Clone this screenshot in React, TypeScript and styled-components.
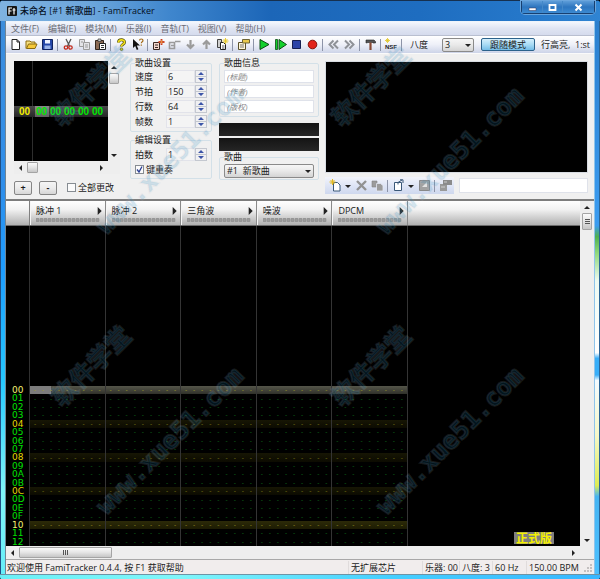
import React, { useState } from "react";
import styled, { createGlobalStyle, css } from "styled-components";

const Global = createGlobalStyle`
  * { box-sizing: border-box; }
  html, body { margin: 0; padding: 0; }
  body {
    font-family: "Open Sans", "Noto Sans CJK SC", sans-serif;
    font-size: 9px;
    line-height: 12px;
    color: #1a1a1a;
    background: #000;
  }
  button, input, select { font: inherit; color: inherit; margin: 0; }
`;

const Window = styled.div`
  position: relative;
  display: grid;
  grid-template: 21px 1fr 6px / 6px minmax(0, 1fr) 6px;
  min-height: 100vh;
  overflow: hidden;
  background: #2a7fd0;
  border-radius: 4px;
`;

const TitleBar = styled.header`
  grid-column: 1 / 4;
  display: flex;
  align-items: center;
  padding: 0 5px 0 7px;
  border-top: 1px solid #16304f;
  background: linear-gradient(90deg, #7fb2e0 0, #6ca6dc 90px, #3f86cd 170px, #1c66b8 270px, #1e6dc0 420px, #2577c9 520px, #2f84d2 100%);
  color: #05101f;
`;

const Title = styled.h1`
  flex: 1;
  margin: 0 0 0 3px;
  font-size: 9px;
  font-weight: 500;
  white-space: nowrap;
`;

const WindowButtons = styled.div`
  align-self: flex-start;
  display: flex;
  height: 13px;
  border: 1px solid #173f70;
  border-top: 0;
  border-radius: 0 0 4px 4px;
  box-shadow: 0 0 0 1px #6aa5dd;
`;

const WindowButton = styled.button<{ $wide?: boolean }>`
  display: flex;
  align-items: center;
  justify-content: center;
  width: ${(p) => (p.$wide ? 32 : 20)}px;
  padding: 0;
  border: 0;
  border-left: 1px solid #4488c8;
  background: linear-gradient(#5d9cd8, #2d75bf 50%, #3c8ad2);
  &:first-child { border-left: 0; }
`;

const LeftFrame = styled.div`
  border-right: 1px solid #6f8494;
  border-left: 1px solid #1f4f86;
  background: linear-gradient(#3d8ddb, #2f8eea 30%, #1d9dff 45%, #25c8ff 65%, #7ff4f8 85%, #66eef8);
`;

const RightFrame = styled.div`
  border-left: 1px solid #8fc4ea;
  border-right: 1px solid #2a6496;
  background: linear-gradient(
    #2b80cf 0, #3b9cf0 37%, #4fb04f 39%, #8fd87c 42%, #eefaf2 47%, #ffffff 60%,
    #38aef8 61%, #38aef8 64%, #f4fbff 65%, #f6f8c8 75%, #dcec55 84%, #45b4f2 86%, #4bc0ff 100%
  );
`;

const BottomFrame = styled.div`
  grid-column: 1 / 4;
  border-top: 1px solid #6d93a5;
  background: linear-gradient(90deg, #6af0f6, #7ff6fa 30%, #45cfff 65%, #38b6ff);
  border-bottom: 1px solid #2f7ba0;
`;

const Client = styled.main`
  display: flex;
  flex-direction: column;
  min-width: 0;
  background: #f0f0f0;
`;

const MenuBar = styled.nav`
  display: flex;
  gap: 9px;
  padding: 0 5px;
  height: 15px;
  line-height: 14px;
  border-top: 1px solid #eef4fb;
  background: linear-gradient(#f4f7fd, #dfe4f2 50%, #d5dbed);
  border-bottom: 1px solid #b9bfd0;
`;

const MenuItem = styled.button`
  padding: 0;
  border: 0;
  background: none;
  color: #6a6c76;
  white-space: nowrap;
`;

const ToolBar = styled.div`
  display: flex;
  align-items: center;
  height: 17px;
  padding-left: 1px;
  overflow: hidden;
  background: linear-gradient(#ffffff, #eef0f8 50%, #cdd4e8);
`;

const ToolButton = styled.button<{ $narrow?: boolean }>`
  display: flex;
  flex: none;
  align-items: center;
  justify-content: center;
  width: ${(p) => (p.$narrow ? 10 : 16)}px;
  height: 16px;
  padding: 0;
  border: 0;
  background: none;
`;

const ToolSeparator = styled.i`
  flex: none;
  width: 1px;
  height: 12px;
  margin: 0 2px;
  background: #8d94a8;
`;

const ToolText = styled.label<{ $gap: number }>`
  flex: none;
  margin-left: ${(p) => p.$gap}px;
  white-space: nowrap;
  display: flex;
  align-items: center;
`;

const SelectBox = styled.span<{ $width: number; $gap?: number }>`
  position: relative;
  flex: none;
  display: block;
  width: ${(p) => p.$width}px;
  margin-left: ${(p) => p.$gap ?? 0}px;
  select {
    display: block;
    width: 100%;
    height: 14px;
    padding: 0 2px;
    appearance: none;
    border: 1px solid #8a8a8a;
    border-radius: 2px;
    background: linear-gradient(#f6f6f6, #e9e9e9 50%, #d4d4d4);
    line-height: 12px;
  }
  svg {
    position: absolute;
    right: 3px;
    top: 4px;
    pointer-events: none;
  }
`;

const FollowButton = styled.button`
  flex: none;
  width: 54px;
  height: 13px;
  margin-left: 7px;
  padding: 0;
  border: 1px solid #2c628b;
  border-radius: 2px;
  background: linear-gradient(#d5effc, #a9dbf5 50%, #74bde8);
  line-height: 10px;
`;

const Controls = styled.section`
  display: flex;
  align-items: flex-start;
  height: 146px;
  padding: 0 6px 0 8px;
  border-top: 1px solid #fafafa;
`;

const FramePane = styled.div`
  display: flex;
  flex-direction: column;
  width: 106px;
  margin: 7px 10px 0 0;
`;

const FrameGrid = styled.div`
  display: grid;
  grid-template: 100px 13px / 94px 12px;
`;

const FrameList = styled.div`
  display: flex;
  align-items: center;
  background: linear-gradient(90deg, transparent 18px, #2e2e2e 18px, #2e2e2e 19px, transparent 19px) #000;
`;

const FrameRow = styled.div`
  display: flex;
  width: 100%;
  height: 11px;
  padding-left: 4px;
  align-items: center;
  background: linear-gradient(#4a4a4a, #262626);
  font-family: "Liberation Sans", sans-serif;
  font-size: 10px;
  font-weight: 700;
  line-height: 11px;
`;

const FrameCell = styled.span<{ $kind: "index" | "cursor" | "value" }>`
  width: 14px;
  padding-left: 1px;
  color: ${(p) => (p.$kind === "index" ? "#f4f000" : "#00e800")};
  ${(p) => p.$kind === "index" && css`margin-right: 3px;`}
  ${(p) => p.$kind === "cursor" && css`background: linear-gradient(#8a8a8a, #5f5f5f);`}
`;

const ScrollTrack = styled.div<{ $vertical?: boolean }>`
  display: flex;
  flex-direction: ${(p) => (p.$vertical ? "column" : "row")};
  align-items: center;
  justify-content: space-between;
  padding: ${(p) => (p.$vertical ? "1px 0" : "0 1px")};
  background: #eeeeee;
`;

const ScrollLead = styled.div<{ $vertical?: boolean }>`
  display: flex;
  flex-direction: ${(p) => (p.$vertical ? "column" : "row")};
  align-items: center;
`;

const ScrollArrow = styled.button`
  display: flex;
  align-items: center;
  justify-content: center;
  width: 12px;
  height: 11px;
  padding: 0;
  border: 0;
  background: none;
`;

const Thumb = styled.div<{ $w: number; $h: number }>`
  display: flex;
  align-items: center;
  justify-content: center;
  width: ${(p) => p.$w}px;
  height: ${(p) => p.$h}px;
  border: 1px solid #a4a4a4;
  border-radius: 1px;
  background: linear-gradient(#fafafa, #e4e4e4 50%, #c6c6c6);
`;

const FrameActions = styled.div`
  display: flex;
  align-items: center;
  gap: 7px;
  margin-top: 6px;
  white-space: nowrap;
`;

const SmallButton = styled.button`
  flex: none;
  width: 18px;
  height: 14px;
  padding: 0;
  border: 1px solid #858585;
  border-radius: 2px;
  background: linear-gradient(#f5f5f5, #ebebeb 50%, #d6d6d6);
  font-weight: 700;
  line-height: 10px;
`;

const CheckLabel = styled.label<{ $gap?: number }>`
  display: flex;
  align-items: center;
  gap: 2px;
  height: 15px;
  margin-left: ${(p) => p.$gap ?? 0}px;
  white-space: nowrap;
`;

const CheckBox = styled.input`
  appearance: none;
  flex: none;
  width: 9px;
  height: 9px;
  border: 1px solid #868c92;
  background: #fbfbfb;
`;

const CheckMark = styled.span`
  position: relative;
  display: flex;
  svg { position: absolute; inset: 0; pointer-events: none; }
`;

const Column = styled.div<{ $width: number; $gap: number }>`
  display: flex;
  flex: none;
  flex-direction: column;
  width: ${(p) => p.$width}px;
  margin: 3px ${(p) => p.$gap}px 0 0;
`;

const Group = styled.fieldset<{ $bottom?: number }>`
  min-width: 0;
  margin: 0;
  padding: 0 4px ${(p) => p.$bottom ?? 2}px;
  border: 1px solid #d3e0e8;
  border-radius: 2px;
  legend {
    padding: 0;
    line-height: 12px;
  }
`;

const Stack = styled.div<{ $gap?: number; $top?: number }>`
  display: flex;
  flex-direction: column;
  gap: ${(p) => p.$gap ?? 0}px;
  padding-top: ${(p) => p.$top ?? 0}px;
`;

const SpinRow = styled.label`
  display: flex;
  align-items: center;
  height: 15px;
  span { width: 32px; }
`;

const SpinInput = styled.input`
  width: 29px;
  height: 13px;
  padding: 0 1px;
  border: 1px solid #e2e3ea;
  background: #f4f4f4;
  line-height: 11px;
`;

const Spinner = styled.svg`
  flex: none;
  border: 1px solid #c4c8d0;
  background: #f0f0f2;
`;

const InfoInput = styled.input`
  width: 100%;
  height: 13px;
  padding: 0 2px;
  border: 1px solid #dfe2ea;
  background: #fff;
  font-style: italic;
  font-size: 8px;
  &::placeholder { color: #888; opacity: 1; }
`;

const Meters = styled.div`
  display: grid;
  grid-template-rows: 13px 13px;
  gap: 2px;
  margin-top: 6px;
  div { background: linear-gradient(#141414, #262626); }
`;

const InstrumentPane = styled.div`
  flex: 1;
  min-width: 0;
  margin-top: 7px;
`;

const InstrumentList = styled.div`
  height: 112px;
  background: #000;
  border: 1px solid #d8dce2;
`;

const InstrumentBar = styled.div`
  display: flex;
  align-items: center;
  gap: 5px;
  margin-top: 4px;
`;

const InstrumentTools = styled.div`
  display: flex;
  flex: none;
  align-items: center;
  width: 129px;
  height: 17px;
  padding-left: 2px;
  background: linear-gradient(#f2f4fb, #dbe2f4 60%, #cfd8ee);
`;

const NameInput = styled.input`
  flex: 1;
  min-width: 0;
  height: 15px;
  border: 1px solid #dfe2ea;
  background: #fff;
`;

const Editor = styled.section`
  display: grid;
  flex: 1;
  grid-template: minmax(0, 1fr) 13px / minmax(0, 1fr) 14px;
  border-top: 2px solid #7d7d7d;
`;

const Pattern = styled.div`
  position: relative;
  display: flex;
  flex-direction: column;
  min-height: 345px;
  background: #000;
`;

const ChannelHeader = styled.div`
  display: grid;
  grid-template-columns: 24px 378px;
  height: 25px;
  flex: none;
  background: linear-gradient(#ffffff, #f2f2f2 35%, #c4c4c4 80%, #b0b0b0);
  border-bottom: 1px solid #6a6a6a;
`;

const HeaderCorner = styled.div`
  border-right: 1px solid #808080;
`;

const Channels = styled.div`
  display: grid;
  grid-template-columns: repeat(5, minmax(0, 1fr));
`;

const Channel = styled.button`
  display: flex;
  flex-direction: column;
  justify-content: center;
  gap: 1px;
  padding: 0 2px 0 5px;
  border: 0;
  border-left: 1px solid #f6f6f6;
  border-right: 1px solid #8a8a8a;
  background: none;
  text-align: left;
`;

const ChannelName = styled.span`
  display: flex;
  width: 100%;
  align-items: center;
  justify-content: space-between;
  line-height: 13px;
`;

const Body = styled.div`
  display: flex;
  flex: 1;
  flex-direction: column;
`;

const Guides = styled.div`
  flex: 1;
  display: grid;
  grid-template-columns: 24px 378px;
  > :first-child { border-right: 1px solid #303030; }
`;

const Guide = styled.i`
  border-right: 1px solid #343434;
`;

const Rows = styled.div`
  display: grid;
  height: 160px;
  grid-auto-rows: 1fr;
  overflow: hidden;
`;

type Tone = "cursor" | "major" | "minor" | "plain";

const Row = styled.div<{ $tone: Tone }>`
  display: grid;
  grid-template-columns: 24px 378px;
  align-items: center;
  min-height: 0;
  font-family: "DejaVu Sans", sans-serif;
  line-height: 8px;
  color: ${(p) => ({ cursor: "#f4f070", major: "#f4f070", minor: "#e6d800", plain: "#00e000" })[p.$tone]};
`;

const RowNumber = styled.span`
  align-self: stretch;
  padding-left: 6px;
  border-right: 1px solid #303030;
`;

const RowCells = styled(Channels)<{ $tone: Tone }>`
  align-self: stretch;
  background: ${(p) => ({
    cursor: "linear-gradient(#55564a, #30312a)",
    major: "linear-gradient(#2c2a08, #1d1c03)",
    minor: "linear-gradient(#171604, #0c0b01)",
    plain: "transparent",
  })[p.$tone]};
  color: ${(p) => ({ cursor: "#a0a020", major: "#a09a28", minor: "#8a8618", plain: "#0f7a1c" })[p.$tone]};
`;

const NoteCell = styled.span<{ $selected?: boolean }>`
  display: flex;
  justify-content: space-between;
  align-items: center;
  padding: 0 1px;
  border-right: 1px solid #343434;
  ${(p) => p.$selected && css`background: linear-gradient(90deg, #7d7d7d 21px, transparent 21px);`}
`;

const Dots = styled.span`
  display: flex;
  font-size: 6px;
  span { width: 8px; text-align: center; }
`;

const Badge = styled.div`
  position: absolute;
  right: 26px;
  bottom: 2px;
  width: 40px;
  height: 12px;
  background: #7f7f7f;
  color: #f4f000;
  font-family: "Noto Sans CJK SC", sans-serif;
  font-size: 12px;
  font-weight: 700;
  line-height: 12px;
  text-align: center;
`;

const StatusBar = styled.footer`
  display: flex;
  align-items: center;
  height: 15px;
  padding-left: 1px;
  border-top: 1px solid #a8a8a8;
  background: #f1eded;
  white-space: nowrap;
  line-height: 13px;
`;

const StatusCell = styled.span<{ $width?: number }>`
  ${(p) => (p.$width ? css`flex: none; width: ${p.$width}px; padding-left: 2px; border-left: 1px solid #e0dcdc;` : css`flex: 1; min-width: 0;`)}
`;

const Watermark = styled.div<{ $x: number; $y: number }>`
  position: absolute;
  left: ${(p) => p.$x}px;
  top: ${(p) => p.$y}px;
  width: 0;
  height: 0;
  pointer-events: none;
  user-select: none;
`;

const MarkText = styled.span<{ $dx: number; $dy: number }>`
  position: absolute;
  left: ${(p) => p.$dx}px;
  top: ${(p) => p.$dy}px;
  font-family: "DejaVu Sans Mono", "Noto Sans CJK SC", monospace;
  font-size: 25px;
  font-weight: 700;
  line-height: 26px;
  white-space: nowrap;
  color: rgba(20, 130, 190, 0.17);
  -webkit-text-stroke: 2px rgba(190, 195, 200, 0.13);
  paint-order: stroke fill;
  transform: translate(-50%, -50%) rotate(-45deg);
`;

const Icon = ({ children, size = 13 }: { children: React.ReactNode; size?: number }) => (
  <svg width={size} height={size} viewBox="0 0 13 13" aria-hidden="true">{children}</svg>
);

const Arrow = ({ dir, size = 6 }: { dir: "up" | "down" | "left" | "right"; size?: number }) => {
  const d = { up: "M0 4 3 1 6 4z", down: "M0 2h6L3 5z", left: "M4 0 1 3l3 3z", right: "M2 0l3 3-3 3z" }[dir];
  return <svg width={size} height={size} viewBox="0 0 6 6" aria-hidden="true"><path d={d} fill="#222" /></svg>;
};

const star = <path d="M9.500 0v6M6.500 3h6M7.500 1l4 4M11.500 1l-4 4" stroke="#e8c820" strokeWidth=".9" />;
const gray = "#9b9b9b";

const icons: Record<string, React.ReactNode> = {
  new: <path d="M3 1.500h5l2.500 2.500v7.500H3zM8 1.500V4h2.500" fill="#fff" stroke="#222" />,
  open: <><path d="M1 10.500V3h4l1 1h4v2" fill="#f8e080" stroke="#8a6a10" /><path d="M1.500 10.500 3.500 6H12l-2 4.500z" fill="#f6c93a" stroke="#8a6a10" /></>,
  save: <><path d="M1.500 1.500h10v10h-10z" fill="#2446a8" stroke="#10225e" /><path d="M4 2h5v3.500H4z" fill="#eef2ff" /><path d="M3.500 7.500h6V11h-6z" fill="#9bb4e8" /></>,
  cut: <><path d="M4 1l3.500 7M9 1 5.500 8" stroke="#555" strokeWidth="1.300" /><circle cx="4" cy="9.500" r="1.700" fill="none" stroke="#c22b1e" strokeWidth="1.300" /><circle cx="8.500" cy="9.500" r="1.700" fill="none" stroke="#c22b1e" strokeWidth="1.300" /></>,
  copy: <><path d="M1.500 1.500h5v7h-5z" fill="#e4e4e8" stroke={gray} /><path d="M5.500 4.500h6v7h-6z" fill="#e4e4e8" stroke={gray} /><path d="M7 7h3M7 9h3M3 4h2" stroke={gray} /></>,
  paste: <><path d="M1.500 2.500h8v9h-8z" fill="#8b6a55" stroke="#33261e" /><path d="M4 1h3v2.500H4z" fill="#ccc" stroke="#333" strokeWidth=".7" /><path d="M5.500 5.500h6v6h-6z" fill="#fff" stroke="#222" /><path d="M7 7.500h3M7 9.500h3" stroke="#333" /></>,
  help: <><path d="M3.500 4.500C3.500 1 9.500 1 9.500 4.200 9.500 6.400 6.500 6 6.500 8.500" fill="none" stroke="#55500a" strokeWidth="3" /><path d="M3.500 4.500C3.500 1 9.500 1 9.500 4.200 9.500 6.400 6.500 6 6.500 8.500" fill="none" stroke="#f3e11a" strokeWidth="1.600" /><circle cx="6.500" cy="11.200" r="1.300" fill="#e4cf10" stroke="#55500a" strokeWidth=".6" /></>,
  whats: <><path d="M2 1v9l2.200-2 1.600 4 1.600-.7L5.800 7.500H9z" fill="#111" /><path d="M8.500 2.500c0-2 3.500-2 3.500 0 0 1.300-1.700 1.200-1.700 2.800M10.300 6.500v1.200" fill="none" stroke="#a46b18" strokeWidth="1.200" /></>,
  add: <><path d="M1.500 4.500h6v7h-6z" fill="#f3d7cf" stroke="#3a2a26" /><path d="M3 7h3M3 9.500h3" stroke="#3a2a26" /><path d="M9.500 1v6M6.500 4h6" stroke="#c83c22" strokeWidth="1.800" /><path d="M9.500 2v4M7.500 4h4" stroke="#f4b050" strokeWidth=".6" /></>,
  remove: <path d="M1.500 4.500h5v6h-5zM3 7.500h3M7 3.500h5.500" fill="none" stroke={gray} strokeWidth="1.600" />,
  down: <path d="M6.500 2v7M3 6.500 6.500 10 10 6.500" fill="none" stroke={gray} strokeWidth="2.200" />,
  up: <path d="M6.500 11V4M3 6.500 6.500 3 10 6.500" fill="none" stroke={gray} strokeWidth="2.200" />,
  duplicate: <><path d="M1.500 1.500h4v8h-4z" fill="#cfcfcf" stroke="#444" /><path d="M4.500 4.500h3l2 2v5h-5z" fill="#fff" stroke="#222" /><path d="M6 8h2.500M6 10h2.500" stroke="#555" />{star}</>,
  props: <><path d="M1.500 4.500h7v7h-7z" fill="#fff6d8" stroke="#5b512a" /><path d="M3 7h4M3 9h4" stroke="#777" /><path d="M5.500 1.500h7v3.500h-7z" fill="#e9c94c" stroke="#6d6335" /></>,
  play: <path d="M2 1.500 11 6.500 2 11.500z" fill="#12d02c" stroke="#0a4a12" />,
  playAll: <><path d="M1.500 1.500h2v10h-2z" fill="#12d02c" stroke="#0a4a12" strokeWidth=".8" /><path d="M5 1.500l7.500 5L5 11.500z" fill="#12d02c" stroke="#0a4a12" /></>,
  stop: <path d="M2.500 2.500h8v8h-8z" fill="#2b43a8" stroke="#161f52" />,
  record: <circle cx="6.500" cy="6.500" r="4.300" fill="#e2231a" stroke="#841009" />,
  prev: <path d="M6.500 2.500l-4 4 4 4M11 2.500l-4 4 4 4" fill="none" stroke="#8f9298" strokeWidth="2" />,
  next: <path d="M2 2.500l4 4-4 4M6.500 2.500l4 4-4 4" fill="none" stroke="#8f9298" strokeWidth="2" />,
  hammer: <><path d="M2 2h8l1.500 1.500V5H9V4.500H4L2 5z" fill="#555" stroke="#222" strokeWidth=".6" /><path d="M6.500 4.500V12" stroke="#8a4a34" strokeWidth="2.200" /></>,
  instNew: <><path d="M4.500 3.500h4l2.500 2.500v6H4.500z" fill="#fff" stroke="#3b5878" /><path d="M3.500 0v6M.5 3h6M1.500 1l4 4M5.500 1l-4 4" stroke="#e3b91e" /></>,
  cross: <path d="M2 2l9 9M11 2 2 11" stroke="#929292" strokeWidth="2.400" />,
  instCopy: <><path d="M1 2h5v6H1z" fill={gray} stroke="#858585" strokeWidth=".6" /><path d="M5.500 4.500h4l2.500 2v5.500H5.500z" fill={gray} stroke="#e4e8f4" strokeWidth=".8" /></>,
  load: <><path d="M2.500 3.500h7v8h-7z" fill="#fff" stroke="#3b5878" /><path d="M6 5.500V3.500L10 1M8 .8h3V4" fill="none" stroke="#3b5878" /></>,
  saveGray: <><path d="M1.500 1.500h10v10h-10z" fill="#a2a2a2" stroke="#888" /><path d="M4 8l5-5v5z" fill="#e2e2e2" /></>,
  editGray: <><path d="M1 5h7v7H1z" fill="#999" /><path d="M4 1h9v5H4z" fill="#8b8b8b" /><path d="M2 8h4M5 3h3" stroke="#ddd" strokeWidth=".8" /></>,
};

const TOOLS: (string[] | null)[] = [
  ["new", "新建"], ["open", "打开"], ["save", "保存"], null,
  ["cut", "剪切"], ["copy", "复制"], ["paste", "粘贴"], null,
  ["help", "关于"], ["whats", "帮助"], null,
  ["add", "添加帧"], ["remove", "移除帧"], ["down", "下移"], ["up", "上移"], ["duplicate", "复制帧"], null,
  ["props", "模块属性"], null,
  ["play", "播放"], ["playAll", "循环播放"], ["stop", "停止"], ["record", "录制"], null,
  ["prev", "上一首"], ["next", "下一首"], null,
  ["hammer", "设置"], null,
];

const ROW_COUNT = 19;
const CHANNELS = ["脉冲 1", "脉冲 2", "三角波", "噪波", "DPCM"];
const hex = (n: number) => n.toString(16).toUpperCase().padStart(2, "0");
const toneOf = (n: number): Tone => (n === 0 ? "cursor" : n % 16 === 0 ? "major" : n % 4 === 0 ? "minor" : "plain");

const DotGroup = ({ count }: { count: number }) => (
  <Dots>{Array.from({ length: count }, (_, i) => <span key={i}>-</span>)}</Dots>
);

const SpinField = ({ label, value }: { label: string; value: number }) => {
  const [text, setText] = useState(String(value));
  return (
    <SpinRow>
      <span>{label}</span>
      <SpinInput value={text} onChange={(e) => setText(e.target.value)} />
      <Spinner width="12" height="13" viewBox="0 0 10 11" aria-hidden="true">
        <path d="M0 5.500h10" stroke="#c4c8d0" />
        <path d="M5 1l3 3H2zM5 10l3-3H2z" fill="#3c55a8" />
      </Spinner>
    </SpinRow>
  );
};

const Tool = ({ name, label }: { name: string; label: string }) => (
  <ToolButton aria-label={label}><Icon>{icons[name]}</Icon></ToolButton>
);

const WATERMARKS = [[0, 0], [280, 0], [0, 280], [280, 280]];

export default function App() {
  const [keyRepeat, setKeyRepeat] = useState(true);
  const [changeAll, setChangeAll] = useState(false);
  return (
    <>
      <Global />
      <Window>
        <TitleBar>
          <svg width="10" height="10" viewBox="0 0 10 10" aria-hidden="true">
            <rect width="10" height="10" rx="1" fill="#151515" />
            <path d="M2 8.500V2h3M2 5h2.500M7 2v6.500M5.500 4h3" stroke="#fff" strokeWidth="1.200" fill="none" />
          </svg>
          <Title>未命名 [#1 新歌曲] - FamiTracker</Title>
          <WindowButtons>
            <WindowButton aria-label="最小化"><svg width="9" height="9" viewBox="0 0 9 9"><path d="M1 5h7v2.500H1z" fill="#fff" stroke="#335" strokeWidth=".5" /></svg></WindowButton>
            <WindowButton aria-label="最大化"><svg width="9" height="9" viewBox="0 0 9 9"><path d="M1.500 2h6v5h-6z" fill="none" stroke="#fff" strokeWidth="1.800" /></svg></WindowButton>
            <WindowButton $wide aria-label="关闭"><svg width="9" height="9" viewBox="0 0 9 9"><path d="M1.500 1.500l6 6M7.500 1.500l-6 6" stroke="#fff" strokeWidth="2" /></svg></WindowButton>
          </WindowButtons>
        </TitleBar>
        <LeftFrame />
        <Client>
          <MenuBar>
            {["文件(F)", "编辑(E)", "模块(M)", "乐器(I)", "音轨(T)", "视图(V)", "帮助(H)"].map((m) => <MenuItem key={m}>{m}</MenuItem>)}
          </MenuBar>
          <ToolBar>
            {TOOLS.map((t, i) => (t ? <Tool key={i} name={t[0]} label={t[1]} /> : <ToolSeparator key={i} />))}
            <ToolButton aria-label="NSF">
              <svg width="14" height="13" viewBox="0 0 14 13">
                <path d="M3.500 0v5M1 2.500h5M2 1l3 3M5 1 2 4" stroke="#e0c41e" strokeWidth=".8" />
                <text x="1" y="11" fontFamily="Liberation Sans" fontSize="6" fontWeight="700" fill="#222">NSF</text>
              </svg>
            </ToolButton>
            <ToolSeparator />
            <ToolText $gap={6} htmlFor="octave">八度</ToolText>
            <SelectBox $width={32} $gap={14}>
              <select id="octave" defaultValue="3">{[0, 1, 2, 3, 4, 5, 6, 7].map((n) => <option key={n}>{n}</option>)}</select>
              <Arrow dir="down" />
            </SelectBox>
            <FollowButton>跟随模式</FollowButton>
            <ToolText as="span" $gap={6}>行高亮,&nbsp;&nbsp;1:st</ToolText>
          </ToolBar>
          <Controls>
            <FramePane>
              <FrameGrid>
                <FrameList>
                  <FrameRow>
                    <FrameCell $kind="index">00</FrameCell>
                    <FrameCell $kind="cursor">00</FrameCell>
                    {[0, 1, 2, 3].map((i) => <FrameCell key={i} $kind="value">00</FrameCell>)}
                  </FrameRow>
                </FrameList>
                <ScrollTrack $vertical>
                  <ScrollLead $vertical>
                    <ScrollArrow aria-label="上"><Arrow dir="up" /></ScrollArrow>
                    <Thumb $w={10} $h={11} />
                  </ScrollLead>
                  <ScrollArrow aria-label="下"><Arrow dir="down" /></ScrollArrow>
                </ScrollTrack>
                <ScrollTrack>
                  <ScrollLead>
                    <ScrollArrow aria-label="左"><Arrow dir="left" /></ScrollArrow>
                    <Thumb $w={11} $h={11} />
                  </ScrollLead>
                  <ScrollArrow aria-label="右"><Arrow dir="right" /></ScrollArrow>
                </ScrollTrack>
                <ScrollTrack />
              </FrameGrid>
              <FrameActions>
                <SmallButton>+</SmallButton>
                <SmallButton>-</SmallButton>
                <CheckLabel $gap={3}>
                  <CheckBox type="checkbox" checked={changeAll} onChange={(e) => setChangeAll(e.target.checked)} />全部更改
                </CheckLabel>
              </FrameActions>
            </FramePane>
            <Column $width={82} $gap={7}>
              <Group>
                <legend>歌曲设置</legend>
                <SpinField label="速度" value={6} />
                <SpinField label="节拍" value={150} />
                <SpinField label="行数" value={64} />
                <SpinField label="帧数" value={1} />
              </Group>
              <Stack $top={2}>
                <Group $bottom={1}>
                  <legend>编辑设置</legend>
                  <Stack $top={1}>
                    <SpinField label="拍数" value={1} />
                    <CheckLabel>
                      <CheckMark>
                        <CheckBox type="checkbox" checked={keyRepeat} onChange={(e) => setKeyRepeat(e.target.checked)} aria-label="键重奏" />
                        {keyRepeat && <svg width="9" height="9" viewBox="0 0 9 9"><path d="M2 4.500l2 2.500 3-5.500" fill="none" stroke="#2b3f94" strokeWidth="1.300" /></svg>}
                      </CheckMark>
                      键重奏
                    </CheckLabel>
                  </Stack>
                </Group>
              </Stack>
            </Column>
            <Column $width={100} $gap={6}>
              <Group $bottom={3}>
                <legend>歌曲信息</legend>
                <Stack $gap={2} $top={1}>
                  <InfoInput placeholder="(标题)" aria-label="标题" />
                  <InfoInput placeholder="(作者)" aria-label="作者" />
                  <InfoInput placeholder="(版权)" aria-label="版权" />
                </Stack>
              </Group>
              <Meters><div /><div /></Meters>
              <Group $bottom={1}>
                <legend>歌曲</legend>
                <Stack $top={1}>
                  <SelectBox $width={90}>
                    <select aria-label="歌曲"><option>#1&nbsp; 新歌曲</option></select>
                    <Arrow dir="down" />
                  </SelectBox>
                </Stack>
              </Group>
            </Column>
            <InstrumentPane>
              <InstrumentList />
              <InstrumentBar>
                <InstrumentTools>
                  <Tool name="instNew" label="新建乐器" />
                  <ToolButton $narrow aria-label="新建选项"><Arrow dir="down" /></ToolButton>
                  <Tool name="cross" label="删除乐器" />
                  <Tool name="instCopy" label="克隆乐器" />
                  <ToolSeparator />
                  <Tool name="load" label="载入乐器" />
                  <ToolButton $narrow aria-label="载入选项"><Arrow dir="down" /></ToolButton>
                  <Tool name="saveGray" label="保存乐器" />
                  <ToolSeparator />
                  <Tool name="editGray" label="编辑乐器" />
                </InstrumentTools>
                <NameInput aria-label="乐器名称" />
              </InstrumentBar>
            </InstrumentPane>
          </Controls>
          <Editor>
            <Pattern>
              <ChannelHeader>
                <HeaderCorner />
                <Channels>
                  {CHANNELS.map((c) => (
                    <Channel key={c}>
                      <ChannelName>{c}<Arrow dir="right" size={8} /></ChannelName>
                      <svg width="64" height="4" viewBox="0 0 64 4" aria-hidden="true">
                        {Array.from({ length: 16 }, (_, i) => <rect key={i} x={i * 4} y="0" width="3" height="4" rx="1" fill="#9c9c9c" stroke="#858585" strokeWidth=".5" />)}
                      </svg>
                    </Channel>
                  ))}
                </Channels>
              </ChannelHeader>
              <Body>
                <Guides>
                  <div />
                  <Channels>{CHANNELS.map((c) => <Guide key={c} />)}</Channels>
                </Guides>
                <Rows>
                  {Array.from({ length: ROW_COUNT }, (_, r) => {
                    const tone = toneOf(r);
                    return (
                      <Row key={r} $tone={tone}>
                        <RowNumber>{hex(r)}</RowNumber>
                        <RowCells $tone={tone}>
                          {CHANNELS.map((c, i) => (
                            <NoteCell key={c} $selected={r === 0 && i === 0}>
                              <DotGroup count={3} /><DotGroup count={2} /><DotGroup count={1} /><DotGroup count={3} />
                            </NoteCell>
                          ))}
                        </RowCells>
                      </Row>
                    );
                  })}
                </Rows>
              </Body>
              <Badge>正式版</Badge>
            </Pattern>
            <ScrollTrack $vertical>
              <ScrollLead $vertical>
                <ScrollArrow aria-label="向上"><Arrow dir="up" /></ScrollArrow>
                <Thumb $w={10} $h={17}>
                  <svg width="5" height="7" viewBox="0 0 5 7"><path d="M0 1.500h5M0 3.500h5M0 5.500h5" stroke="#555" /></svg>
                </Thumb>
              </ScrollLead>
              <ScrollArrow aria-label="向下"><Arrow dir="down" /></ScrollArrow>
            </ScrollTrack>
            <ScrollTrack>
              <ScrollLead>
                <ScrollArrow aria-label="向左"><Arrow dir="left" /></ScrollArrow>
                <Thumb $w={93} $h={11}>
                  <svg width="7" height="5" viewBox="0 0 7 5"><path d="M1.500 0v5M3.500 0v5M5.500 0v5" stroke="#555" /></svg>
                </Thumb>
              </ScrollLead>
              <ScrollArrow aria-label="向右"><Arrow dir="right" /></ScrollArrow>
            </ScrollTrack>
            <ScrollTrack />
          </Editor>
          <StatusBar>
            <StatusCell>欢迎使用 FamiTracker 0.4.4, 按 F1 获取帮助</StatusCell>
            <StatusCell $width={74}>无扩展芯片</StatusCell>
            <StatusCell $width={37}>乐器: 00</StatusCell>
            <StatusCell $width={33}>八度: 3</StatusCell>
            <StatusCell $width={34}>60 Hz</StatusCell>
            <StatusCell $width={56}>150.00 BPM</StatusCell>
            <svg width="12" height="12" viewBox="0 0 12 12" aria-hidden="true">
              <path d="M8 3h2v2H8zM5 6h2v2H5zM8 6h2v2H8zM2 9h2v2H2zM5 9h2v2H5zM8 9h2v2H8z" fill="#c4c0c0" />
            </svg>
          </StatusBar>
        </Client>
        <RightFrame />
        <BottomFrame />
        {WATERMARKS.map(([x, y]) => (
          <Watermark key={`${x}-${y}`} $x={x} $y={y} aria-hidden="true">
            <MarkText $dx={92} $dy={87}>软件学堂</MarkText>
            <MarkText $dx={170} $dy={161}>www.xue51.com</MarkText>
          </Watermark>
        ))}
      </Window>
    </>
  );
}
